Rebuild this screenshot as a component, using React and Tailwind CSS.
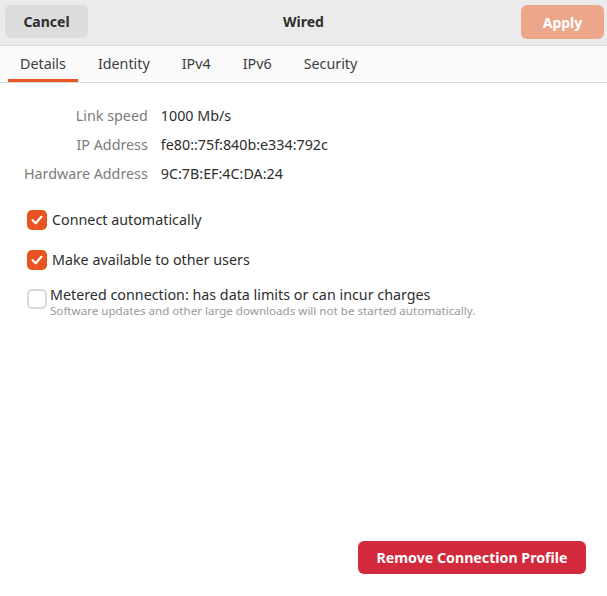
import React from "react";

function Check({ checked }) {
  if (checked) {
    return (
      <div className="w-[20px] h-[20px] rounded-[5px] bg-[#e95420] flex items-center justify-center shrink-0">
        <svg width="14" height="14" viewBox="0 0 14 14">
          <path d="M2.6 7.2 L5.6 10.2 L11.4 3.8" fill="none" stroke="white" strokeWidth="2.2" strokeLinecap="round" strokeLinejoin="round" />
        </svg>
      </div>
    );
  }
  return <div className="w-[20px] h-[20px] rounded-[5px] border-2 border-[#dadada] bg-white shrink-0" />;
}

export default function App() {
  const tabs = ["Details", "Identity", "IPv4", "IPv6", "Security"];
  const font = { fontFamily: '"Noto Sans", "Open Sans", sans-serif' };
  return (
    <div className="w-[607px] h-[596px] flex flex-col bg-white text-[#2e2e2e] overflow-hidden" style={font}>
      <div className="h-[46px] bg-[#ebebeb] border-b border-[#dadada] flex items-start justify-between px-[5px] pt-[5px] relative shrink-0">
        <button className="w-[83px] h-[33px] rounded-[6px] bg-[#dcdcdc] text-[14px] font-bold text-[#2e2e2e]">Cancel</button>
        <div className="absolute left-0 right-0 top-[4px] h-[34px] flex items-center justify-center text-[14px] font-bold pointer-events-none">Wired</div>
        <button className="w-[83px] h-[34px] rounded-[6px] bg-[#eca68a] text-[14px] font-bold text-white mr-[-2px]">Apply</button>
      </div>
      <div className="h-[37px] bg-[#fafafa] border-b border-[#dadada] flex items-stretch pl-[8px] gap-[8px] shrink-0">
        {tabs.map((t, i) => (
          <div key={t} className={"px-[12px] flex items-center text-[14.3px] text-[#3d3d3d] border-b-[3px] " + (i === 0 ? "border-[#e95420]" : "border-transparent")}>
            <span className="pt-[2px]">{t}</span>
          </div>
        ))}
      </div>
      <div className="flex-1 flex flex-col">
        <div className="grid grid-cols-[auto_1fr] gap-x-[13px] gap-y-[9px] pl-[24px] pt-[23px] text-[14.3px] leading-[20px]">
          <div className="text-right text-[#7b7b7b]">Link speed</div>
          <div>1000 Mb/s</div>
          <div className="text-right text-[#7b7b7b]">IP Address</div>
          <div>fe80::75f:840b:e334:792c</div>
          <div className="text-right text-[#7b7b7b]">Hardware Address</div>
          <div>9C:7B:EF:4C:DA:24</div>
        </div>
        <div className="flex flex-col pl-[27px] mt-[26px] text-[14.3px] leading-[20px]">
          <div className="flex items-center gap-[5px]">
            <Check checked />
            <span>Connect automatically</span>
          </div>
          <div className="flex items-center gap-[5px] mt-[20px]">
            <Check checked />
            <span>Make available to other users</span>
          </div>
          <div className="flex items-start gap-[3px] mt-[19px]">
            <Check />
            <div className="flex flex-col mt-[-3px]">
              <span className="leading-[18px]">Metered connection: has data limits or can incur charges</span>
              <span className="text-[11.6px] leading-[13px] text-[#9a9a9a]">Software updates and other large downloads will not be started automatically.</span>
            </div>
          </div>
        </div>
        <div className="flex-1" />
        <div className="flex justify-end pr-[21px] pb-[22px]">
          <button className="w-[228px] h-[33px] rounded-[6px] bg-[#d22a3c] text-white text-[14.2px] font-bold">Remove Connection Profile</button>
        </div>
      </div>
    </div>
  );
}
